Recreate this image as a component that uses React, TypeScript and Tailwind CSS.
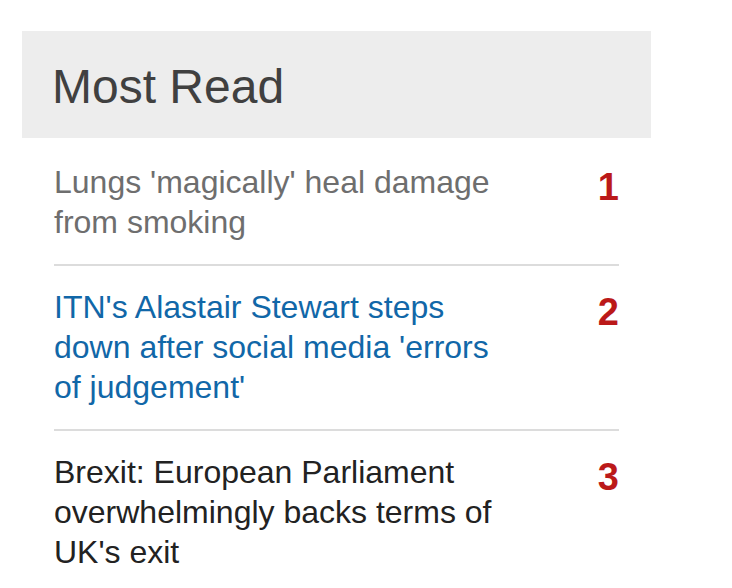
import React from 'react';

interface Story {
  rank: number;
  title: string;
  tone: 'visited' | 'hover' | 'default';
}

const stories: Story[] = [
  { rank: 1, title: "Lungs 'magically' heal damage from smoking", tone: 'visited' },
  { rank: 2, title: "ITN's Alastair Stewart steps down after social media 'errors of judgement'", tone: 'hover' },
  { rank: 3, title: "Brexit: European Parliament overwhelmingly backs terms of UK's exit", tone: 'default' },
];

const toneClass = {
  visited: 'text-[#6e6e6e]',
  hover: 'text-[#1167a8]',
  default: 'text-[#222222]',
};

export default function App() {
  return (
    <div className="min-h-[588px] w-[732px] overflow-hidden bg-white pt-[31px] pl-[22px] font-['Liberation_Sans',Arial,sans-serif]">
      <div className="w-[629px]">
        {/* Header */}
        <div className="h-[107px] bg-[#ededed] pl-[30px] pt-[32px]">
          <h2 className="text-[48px] leading-[48px] font-normal text-[#404040]">Most Read</h2>
        </div>

        {/* List */}
        <ol className="mt-[3px] ml-[32px] w-[565px]">
          {stories.map((s) => (
            <li
              key={s.rank}
              className="flex justify-between border-b-2 border-[#dcdcdc] pt-[21px] pb-[22px] last:border-b-0"
            >
              <a href="#" className={`w-[465px] text-[32px] leading-[40px] ${toneClass[s.tone]}`}>
                {s.title}
              </a>
              <span className="mt-[5px] text-[38px] leading-[40px] font-bold text-[#bb1919]">{s.rank}</span>
            </li>
          ))}
        </ol>
      </div>
    </div>
  );
}
